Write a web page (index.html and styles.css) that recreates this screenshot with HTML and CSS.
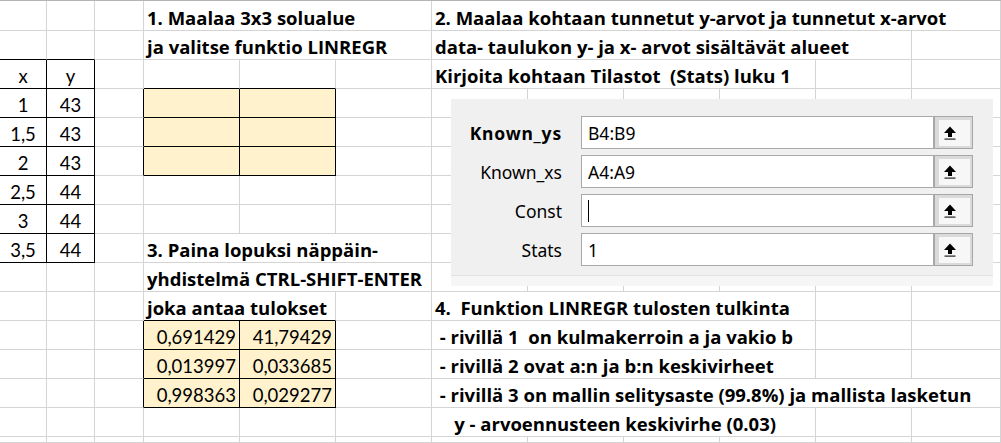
FILE: index.html
```html
<!DOCTYPE html>
<html lang="fi">
<head>
<meta charset="utf-8">
<title>LINREGR</title>
<link rel="stylesheet" href="styles.css">
</head>
<body>
<div class="sheet">
  <!-- row 1 -->
  <div class="c"></div><div class="c"></div><div class="c"></div>
  <div class="c s3 t">1. Maalaa 3x3 solualue</div>
  <div class="c s6 t">2. Maalaa kohtaan tunnetut y-arvot ja tunnetut x-arvot</div>
  <!-- row 2 -->
  <div class="c bb"></div><div class="c bb"></div><div class="c"></div>
  <div class="c s3 t">ja valitse funktio LINREGR</div>
  <div class="c s5 t">data- taulukon y- ja x- arvot sisältävät alueet</div>
  <div class="c"></div>
  <!-- row 3 -->
  <div class="c k m">x</div><div class="c k m">y</div><div class="c"></div>
  <div class="c bb"></div><div class="c bb"></div><div class="c"></div>
  <div class="c s4 t">Kirjoita kohtaan Tilastot  (Stats) luku 1</div>
  <div class="c"></div><div class="c"></div>
  <!-- row 4 -->
  <div class="c k m">1</div><div class="c k m">43</div><div class="c br"></div>
  <div class="c k y"></div><div class="c k y"></div>
  <div class="c"></div><div class="c"></div><div class="c"></div><div class="c"></div><div class="c"></div><div class="c"></div><div class="c"></div>
  <!-- row 5 -->
  <div class="c k m">1,5</div><div class="c k m">43</div><div class="c br"></div>
  <div class="c k y"></div><div class="c k y"></div>
  <div class="c"></div><div class="c"></div><div class="c"></div><div class="c"></div><div class="c"></div><div class="c"></div><div class="c"></div>
  <!-- row 6 -->
  <div class="c k m">2</div><div class="c k m">43</div><div class="c br"></div>
  <div class="c k y"></div><div class="c k y"></div>
  <div class="c"></div><div class="c"></div><div class="c"></div><div class="c"></div><div class="c"></div><div class="c"></div><div class="c"></div>
  <!-- row 7 -->
  <div class="c k m">2,5</div><div class="c k m">44</div><div class="c"></div>
  <div class="c"></div><div class="c"></div>
  <div class="c"></div><div class="c"></div><div class="c"></div><div class="c"></div><div class="c"></div><div class="c"></div><div class="c"></div>
  <!-- row 8 -->
  <div class="c k m">3</div><div class="c k m">44</div><div class="c"></div>
  <div class="c"></div><div class="c"></div>
  <div class="c"></div><div class="c"></div><div class="c"></div><div class="c"></div><div class="c"></div><div class="c"></div><div class="c"></div>
  <!-- row 9 -->
  <div class="c k m">3,5</div><div class="c k m">44</div><div class="c"></div>
  <div class="c s3 t">3. Paina lopuksi näppäin-</div>
  <div class="c"></div><div class="c"></div><div class="c"></div><div class="c"></div><div class="c"></div><div class="c"></div>
  <!-- row 10 -->
  <div class="c"></div><div class="c"></div><div class="c"></div>
  <div class="c s3 t">yhdistelmä CTRL-SHIFT-ENTER</div>
  <div class="c"></div><div class="c"></div><div class="c"></div><div class="c"></div><div class="c"></div><div class="c"></div>
  <!-- row 11 -->
  <div class="c"></div><div class="c"></div><div class="c"></div>
  <div class="c s2 t bb">joka antaa tulokset</div>
  <div class="c"></div>
  <div class="c s4 t">4.  Funktion LINREGR tulosten tulkinta</div>
  <div class="c"></div><div class="c"></div>
  <!-- row 12 -->
  <div class="c"></div><div class="c"></div><div class="c br"></div>
  <div class="c k y n">0,691429</div><div class="c k y n">41,79429</div>
  <div class="c"></div>
  <div class="c s4 t"> - rivillä 1  on kulmakerroin a ja vakio b</div>
  <div class="c"></div><div class="c"></div>
  <!-- row 13 -->
  <div class="c"></div><div class="c"></div><div class="c br"></div>
  <div class="c k y n">0,013997</div><div class="c k y n">0,033685</div>
  <div class="c"></div>
  <div class="c s4 t"> - rivillä 2 ovat a:n ja b:n keskivirheet</div>
  <div class="c"></div><div class="c"></div>
  <!-- row 14 -->
  <div class="c"></div><div class="c"></div><div class="c br"></div>
  <div class="c k y n">0,998363</div><div class="c k y n">0,029277</div>
  <div class="c"></div>
  <div class="c s6 t"> - rivillä 3 on mallin selitysaste (99.8%) ja mallista lasketun</div>
  <!-- row 15 -->
  <div class="c"></div><div class="c"></div><div class="c"></div>
  <div class="c"></div><div class="c"></div><div class="c"></div>
  <div class="c s4 t">    y - arvoennusteen keskivirhe (0.03)</div>
  <div class="c"></div><div class="c"></div>
  <!-- row 16 -->
  <div class="c"></div><div class="c"></div><div class="c"></div><div class="c"></div><div class="c"></div><div class="c"></div>
  <div class="c"></div><div class="c"></div><div class="c"></div><div class="c"></div><div class="c"></div><div class="c"></div>
</div>

<div class="dialog">
  <div class="args">
    <div class="arg">
      <span class="lbl strong">Known_ys</span>
      <span class="field">B4:B9</span>
      <span class="pick"><span class="pick-in"><svg width="12" height="14" viewBox="0 0 12 14"><polygon points="0,7 6,0.5 12,7" fill="#000"/><rect x="4" y="6.5" width="4" height="4.5" fill="#000"/><rect x="0.5" y="12.5" width="11" height="1.2" fill="#222"/></svg></span></span>
    </div>
    <div class="arg">
      <span class="lbl">Known_xs</span>
      <span class="field">A4:A9</span>
      <span class="pick"><span class="pick-in"><svg width="12" height="14" viewBox="0 0 12 14"><polygon points="0,7 6,0.5 12,7" fill="#000"/><rect x="4" y="6.5" width="4" height="4.5" fill="#000"/><rect x="0.5" y="12.5" width="11" height="1.2" fill="#222"/></svg></span></span>
    </div>
    <div class="arg">
      <span class="lbl">Const</span>
      <span class="field"><span class="caret"></span></span>
      <span class="pick"><span class="pick-in"><svg width="12" height="14" viewBox="0 0 12 14"><polygon points="0,7 6,0.5 12,7" fill="#000"/><rect x="4" y="6.5" width="4" height="4.5" fill="#000"/><rect x="0.5" y="12.5" width="11" height="1.2" fill="#222"/></svg></span></span>
    </div>
    <div class="arg">
      <span class="lbl">Stats</span>
      <span class="field">1</span>
      <span class="pick"><span class="pick-in"><svg width="12" height="14" viewBox="0 0 12 14"><polygon points="0,7 6,0.5 12,7" fill="#000"/><rect x="4" y="6.5" width="4" height="4.5" fill="#000"/><rect x="0.5" y="12.5" width="11" height="1.2" fill="#222"/></svg></span></span>
    </div>
  </div>
  <div class="dialog-foot"></div>
</div>
</body>
</html>
```

FILE: styles.css
```css
html, body {
  margin: 0;
  padding: 0;
  background: #ffffff;
  overflow: hidden;
}

body {
  position: relative;
  width: 1001px;
  height: 443px;
  font-family: Lato, "Liberation Sans", sans-serif;
  color: #000;
}

.sheet {
  display: grid;
  grid-template-columns: 47px 48px 49px repeat(8, 96px) 1fr;
  grid-template-rows: 30px repeat(14, 29px) 6px;
  border-top: 1px solid #b4b4b4;
}

.c {
  box-sizing: border-box;
  min-width: 0;
  border-right: 1px solid #d4d4d4;
  border-bottom: 1px solid #d4d4d4;
  display: flex;
  align-items: flex-end;
  padding: 0 3px 2px 3px;
  font-size: 18.5px;
  line-height: 20px;
  white-space: pre;
}

.t {
  font-family: "Open Sans", Lato, sans-serif;
  font-weight: 700;
  font-size: 18.5px;
  letter-spacing: 0;
}

.n { justify-content: flex-end; }
.m { justify-content: center; }

.s2 { grid-column: span 2; }
.s3 { grid-column: span 3; }
.s4 { grid-column: span 4; }
.s5 { grid-column: span 5; }
.s6 { grid-column: span 6; }

.y { background: #fff2cc; }
.k { border-right-color: #000; border-bottom-color: #000; }
.bb { border-bottom-color: #000; }
.br { border-right-color: #000; }

/* Function arguments dialog */
.dialog {
  position: absolute;
  left: 451px;
  top: 99px;
  width: 542px;
  font-family: "Noto Sans", "Open Sans", sans-serif;
}

.args {
  box-sizing: border-box;
  height: 177px;
  background: #f0f0f0;
  padding: 17px 20px 0 0;
  border-bottom: 1px solid #e2e2e2;
  display: flex;
  flex-direction: column;
  gap: 6px;
}

.dialog-foot {
  height: 10px;
  background: #f6f6f6;
}

.arg {
  display: flex;
  align-items: center;
  height: 33px;
}

.lbl {
  width: 111px;
  margin-right: 19px;
  text-align: right;
  font-size: 17.5px;
  color: #000;
}

.strong {
  font-weight: 700;
  letter-spacing: 0.8px;
}

.field {
  box-sizing: border-box;
  width: 353px;
  height: 33px;
  background: #fff;
  border: 1px solid #a9a9a9;
  padding-left: 6px;
  display: flex;
  align-items: center;
  font-size: 17.5px;
}

.caret {
  width: 1px;
  height: 22px;
  background: #000;
}

.pick {
  box-sizing: border-box;
  width: 39px;
  height: 33px;
  border: 1px solid #a6a6a6;
  background: #dadada;
  padding: 3px 2px 2px 4px;
  display: flex;
}

.pick-in {
  flex: 1;
  background: #f7f7f7;
  display: flex;
  align-items: flex-start;
  padding: 6px 0 0 5px;
}

.pick-in svg { display: block; }
```
